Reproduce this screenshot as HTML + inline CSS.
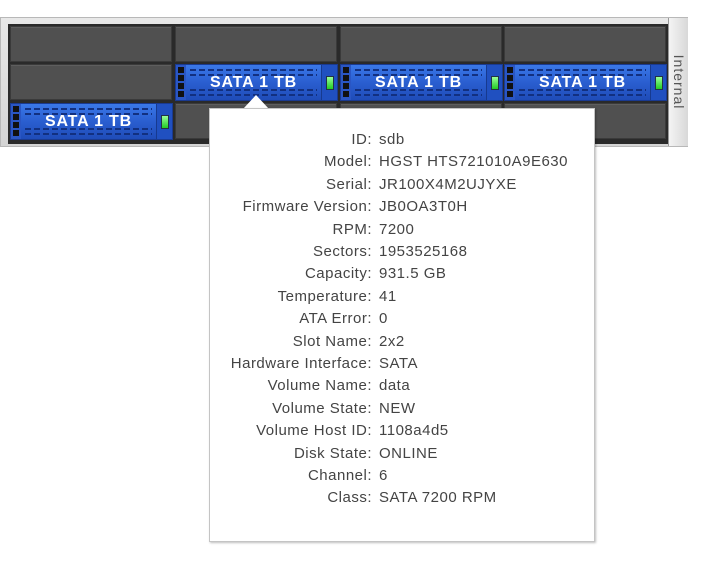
<!DOCTYPE html>
<html><head><style>
body{margin:0;width:706px;height:561px;background:#fff;position:relative;overflow:hidden;font-family:"Liberation Sans","DejaVu Sans",sans-serif}
.chassis{position:absolute;left:0;top:17px;width:688px;height:130px;background:linear-gradient(#e8e8e8,#d4d4d4);border:1px solid #b8b8b8;box-sizing:border-box}
.inner{position:absolute;left:8px;top:24px;width:660px;height:120px;background:#2a2a2a}
.side{position:absolute;left:668px;top:18px;width:19px;height:128px;background:linear-gradient(90deg,#f4f4f4,#d8d8d8);border-left:1px solid #999}
.side span{position:absolute;left:50%;top:50%;transform:translate(-50%,-50%) rotate(90deg);font-size:14px;color:#555;letter-spacing:1px}
.slot{position:absolute;width:162px;height:36px;background:#505050;border:1px solid #3a3a3a;box-sizing:border-box;box-shadow:inset 0 1px 0 #5e5e5e}
.drive{position:absolute;width:163px;height:37px;background:linear-gradient(#3a78e8,#2a5ed0 50%,#1f4cb8);box-sizing:border-box;border:1px solid #1a3a90}
.drive .h{position:absolute;left:0;top:0;width:10px;height:35px;background:#2a56c4}
.drive .h i{position:absolute;left:2px;width:6px;height:6px;background:#111}
.drive .d{position:absolute;left:14px;right:20px;height:2px;background:repeating-linear-gradient(90deg,#123080 0 6px,transparent 6px 9px)}
.drive .t{position:absolute;left:10px;right:16px;top:0;height:35px;line-height:35px;text-align:center;color:#fff;font-weight:bold;font-size:16px;letter-spacing:.8px}
.drive .l{position:absolute;right:0;top:0;width:15px;height:35px;background:#2050c0;border-left:1px solid #173a8f}
.drive .l b{position:absolute;left:4px;top:11px;width:6px;height:12px;background:linear-gradient(#9f9,#2c2);border:1px solid #234}
.tip{position:absolute;left:209px;top:108px;width:386px;height:434px;background:#fff;border:1px solid #c4c4c4;box-shadow:1px 1px 2px rgba(0,0,0,.25);box-sizing:border-box}
.arrow{position:absolute;left:243px;top:95px;width:0;height:0;border-left:13px solid transparent;border-right:13px solid transparent;border-bottom:14px solid #fff}
.row{position:absolute;left:0;width:386px;font-size:15px;letter-spacing:.5px;color:#444;height:20px;line-height:20px}
.row .k{position:absolute;right:224px;text-align:right;white-space:nowrap}
.row .v{position:absolute;left:169px;white-space:nowrap}
</style></head><body>
<div class="chassis"></div>
<div class="inner"></div>
<div class="side"><span>Internal</span></div>

<div class="slot" style="left:10px;top:26px"></div>
<div class="slot" style="left:175px;top:26px"></div>
<div class="slot" style="left:340px;top:26px"></div>
<div class="slot" style="left:504px;top:26px"></div>
<div class="slot" style="left:10px;top:64px"></div>
<div class="slot" style="left:175px;top:103px"></div>
<div class="slot" style="left:340px;top:103px"></div>
<div class="slot" style="left:504px;top:103px"></div>

<div class="drive" style="left:175px;top:64px"><div class="h"><i style="top:2px"></i><i style="top:10px"></i><i style="top:18px"></i><i style="top:26px"></i></div><div class="d" style="top:4px"></div><div class="d" style="top:9px"></div><div class="d" style="top:24px"></div><div class="d" style="top:29px"></div><div class="t">SATA 1 TB</div><div class="l"><b></b></div></div>
<div class="drive" style="left:340px;top:64px"><div class="h"><i style="top:2px"></i><i style="top:10px"></i><i style="top:18px"></i><i style="top:26px"></i></div><div class="d" style="top:4px"></div><div class="d" style="top:9px"></div><div class="d" style="top:24px"></div><div class="d" style="top:29px"></div><div class="t">SATA 1 TB</div><div class="l"><b></b></div></div>
<div class="drive" style="left:504px;top:64px"><div class="h"><i style="top:2px"></i><i style="top:10px"></i><i style="top:18px"></i><i style="top:26px"></i></div><div class="d" style="top:4px"></div><div class="d" style="top:9px"></div><div class="d" style="top:24px"></div><div class="d" style="top:29px"></div><div class="t">SATA 1 TB</div><div class="l"><b></b></div></div>
<div class="drive" style="left:10px;top:103px"><div class="h"><i style="top:2px"></i><i style="top:10px"></i><i style="top:18px"></i><i style="top:26px"></i></div><div class="d" style="top:4px"></div><div class="d" style="top:9px"></div><div class="d" style="top:24px"></div><div class="d" style="top:29px"></div><div class="t">SATA 1 TB</div><div class="l"><b></b></div></div>

<div class="arrow"></div>
<div class="tip">
<div class="row" style="top:21px"><span class="k">ID:</span><span class="v">sdb</span></div>
<div class="row" style="top:43px"><span class="k">Model:</span><span class="v">HGST HTS721010A9E630</span></div>
<div class="row" style="top:66px"><span class="k">Serial:</span><span class="v">JR100X4M2UJYXE</span></div>
<div class="row" style="top:88px"><span class="k">Firmware Version:</span><span class="v">JB0OA3T0H</span></div>
<div class="row" style="top:111px"><span class="k">RPM:</span><span class="v">7200</span></div>
<div class="row" style="top:133px"><span class="k">Sectors:</span><span class="v">1953525168</span></div>
<div class="row" style="top:155px"><span class="k">Capacity:</span><span class="v">931.5 GB</span></div>
<div class="row" style="top:178px"><span class="k">Temperature:</span><span class="v">41</span></div>
<div class="row" style="top:200px"><span class="k">ATA Error:</span><span class="v">0</span></div>
<div class="row" style="top:223px"><span class="k">Slot Name:</span><span class="v">2x2</span></div>
<div class="row" style="top:245px"><span class="k">Hardware Interface:</span><span class="v">SATA</span></div>
<div class="row" style="top:267px"><span class="k">Volume Name:</span><span class="v">data</span></div>
<div class="row" style="top:290px"><span class="k">Volume State:</span><span class="v">NEW</span></div>
<div class="row" style="top:312px"><span class="k">Volume Host ID:</span><span class="v">1108a4d5</span></div>
<div class="row" style="top:335px"><span class="k">Disk State:</span><span class="v">ONLINE</span></div>
<div class="row" style="top:357px"><span class="k">Channel:</span><span class="v">6</span></div>
<div class="row" style="top:379px"><span class="k">Class:</span><span class="v">SATA 7200 RPM</span></div>
</div>
</body></html>
